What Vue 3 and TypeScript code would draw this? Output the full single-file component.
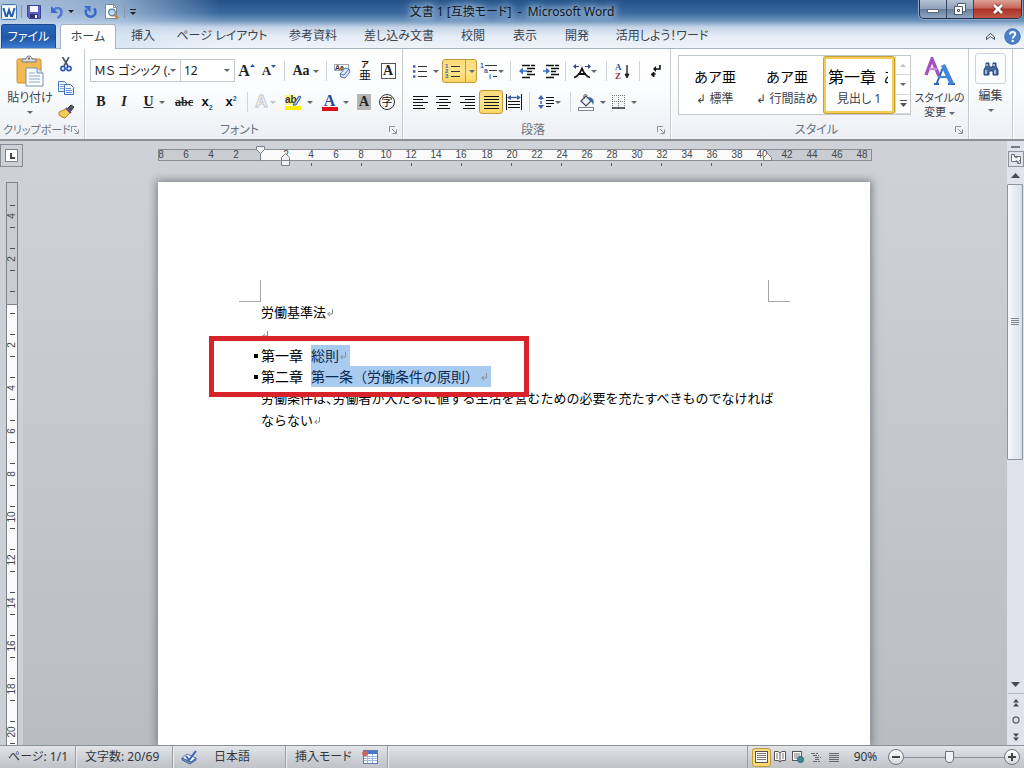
<script setup lang="ts">
import { ref } from 'vue'

const zoom = ref(90)
const fontName = ref('ＭＳ ゴシック (.')
const fontSize = ref('12')

const tabs: string[] = ['挿入', 'ページ レイアウト', '参考資料', '差し込み文書', '校閲', '表示', '開発', '活用しよう！ワード']

interface Mark { label: number; pos: number }

const rulerMarks: Mark[] = []
for (let n = -8; n <= 48; n += 2) {
  if (n !== 0) rulerMarks.push({ label: Math.abs(n), pos: Math.round(103 + n * 12.53) })
}

const sideMarks: Mark[] = []
for (let n = -4; n <= 20; n += 2) {
  if (n !== 0) sideMarks.push({ label: Math.abs(n), pos: Math.round(120 + n * 21.5) })
}
const sideTicks: number[] = []
for (let n = 0; n < 32; n++) sideTicks.push(Math.round(24 + n * 21.5))
</script>

<template>
  <div class="app">
    <header class="top">
      <div class="titlebar">
        <div class="quick">
          <button class="plain" aria-label="Word">
            <svg width="16" height="16" viewBox="0 0 16 16"><rect x=".5" y=".5" width="15" height="15" rx="1" fill="#dbe9f9" stroke="#4577b4" /><rect x="2" y="2" width="12" height="12" fill="#fff" /><path d="M2.500 4l2.300 8h1.200L8 6l2 6h1.200l2.300-8" fill="none" stroke="#245fa8" stroke-width="2" /></svg>
          </button>
          <i class="qsep"></i>
          <button class="plain" aria-label="上書き保存">
            <svg width="16" height="16" viewBox="0 0 16 16"><path d="M1.500 1.500h13v13h-11l-2-2z" fill="#5b5fc7" stroke="#3a3f9c" /><rect x="4" y="2" width="8" height="6" fill="#f4f6ff" /><rect x="4" y="10" width="8" height="4" fill="#33356f" /><rect x="9" y="11" width="2" height="3" fill="#fff" /></svg>
          </button>
          <button class="plain undo" aria-label="元に戻す">
            <svg width="14" height="16" viewBox="0 0 14 16"><path d="M3 6c3-3 8.500-2.500 8.500 2 0 3-1.500 4.500-4 6" fill="none" stroke="#4f79d2" stroke-width="2.400" /><path d="M1 2v7h7z" fill="#3f68cf" /></svg>
          </button>
          <i class="caret dark"></i>
          <button class="plain redo" aria-label="やり直し">
            <svg width="14" height="16" viewBox="0 0 14 16"><path d="M3.500 5.500a4.800 4.800 0 1 0 7.500-1" fill="none" stroke="#3f68cf" stroke-width="2.600" /><path d="M1 2h6.500v6.500z" fill="#3f68cf" /></svg>
          </button>
          <button class="plain preview" aria-label="印刷プレビュー">
            <svg width="16" height="16" viewBox="0 0 16 16"><path d="M1.500.5h8l3 3v11h-11z" fill="#fff" stroke="#7d8796" /><path d="M9.500.5v3h3" fill="none" stroke="#7d8796" /><circle cx="8" cy="8.500" r="3.300" fill="#bcdcf5" stroke="#56789c" stroke-width="1.200" /><path d="M10.500 11l3.500 3.500" stroke="#c5822e" stroke-width="2.400" /></svg>
          </button>
          <i class="qsep"></i>
          <button class="plain" aria-label="カスタマイズ">
            <svg width="8" height="8" viewBox="0 0 8 8"><path d="M1 1.500h6" stroke="#222" /><path d="M1 4h6L4 7z" fill="#222" /></svg>
          </button>
        </div>
        <h1>文書 1 [互換モード] &nbsp;-&nbsp; Microsoft Word</h1>
        <div class="controls">
          <button aria-label="最小化"><svg width="12" height="12" viewBox="0 0 12 12"><rect x=".5" y="6.500" width="11" height="3" fill="#fff" stroke="#5d6a7b" /></svg></button>
          <button aria-label="元に戻す (縮小)"><svg width="12" height="12" viewBox="0 0 12 12"><path d="M3.500.5h8v8h-3v3h-8v-8h3z" fill="#fff" stroke="#4e5a6c" /><path d="M3.500 3.500h5v5M3.500 6.500h2v2h-2z" fill="none" stroke="#4e5a6c" /></svg></button>
          <button class="close" aria-label="閉じる"><svg width="12" height="12" viewBox="0 0 12 12"><path d="M2 2l8 8M10 2l-8 8" stroke="#6a2a25" stroke-width="4.400" /><path d="M2 2l8 8M10 2l-8 8" stroke="#fff" stroke-width="2.800" /></svg></button>
        </div>
      </div>
      <nav class="tabs">
        <button class="file">ファイル</button>
        <button class="home">ホーム</button>
        <div class="rest"><button v-for="t in tabs" :key="t">{{ t }}</button></div>
        <button class="plain" aria-label="リボンの最小化"><svg width="11" height="9" viewBox="0 0 11 9"><path d="M1.500 5l4-3.500 4 3.500v2.500l-4-3-4 3z" fill="#fff" stroke="#3d4859" /></svg></button>
        <button class="plain" aria-label="ヘルプ"><svg width="17" height="17" viewBox="0 0 17 17"><circle cx="8.500" cy="8.500" r="7.700" fill="#4a82cc" stroke="#2f62ad" /><path d="M6 6.500c0-3.500 5.200-3.200 5.200-.3 0 1.900-2.500 2-2.500 4.300" fill="none" stroke="#fff" stroke-width="1.900" /><circle cx="8.700" cy="13" r="1.200" fill="#fff" /></svg></button>
      </nav>
    </header>

    <section class="ribbon">
      <div class="group clipboard">
        <div class="clip-body">
          <button class="paste">
            <svg width="28" height="32" viewBox="0 0 28 32"><rect x="1" y="4" width="24" height="24" rx="1.500" fill="#f2b950" stroke="#c98f34" /><path d="M6 7V4h4c0-4 6-4 6 0h4v3z" fill="#d9dbdd" stroke="#777d83" /><circle cx="13" cy="3.500" r="1" fill="#555" /><path d="M10 13h11l6 5v13H10z" fill="#fbfdff" stroke="#7590b5" /><path d="M21 13v5h6" fill="#d5e4f6" stroke="#7590b5" /><path d="M13 18h6M13 21h11M13 24h11M13 27h11" stroke="#8aa7ce" /></svg>
            <span>貼り付け</span>
            <i class="caret"></i>
          </button>
          <div class="clip-side">
            <button class="plain" aria-label="切り取り"><svg width="12" height="15" viewBox="0 0 12 15"><path d="M2.500 0L8 9M9 0L4 9" stroke="#48525f" stroke-width="1.600" /><circle cx="3" cy="11.500" r="2.100" fill="none" stroke="#2b55b5" stroke-width="1.600" /><circle cx="9" cy="11.500" r="2.100" fill="none" stroke="#2b55b5" stroke-width="1.600" /></svg></button>
            <button class="plain" aria-label="コピー"><svg width="16" height="14" viewBox="0 0 16 14"><path d="M.5.5h6l2 2v8h-8z" fill="#eef5ff" stroke="#4a78bd" /><path d="M2 3.500h4M2 5.500h4M2 7.500h4" stroke="#7ea4dc" /><path d="M6.500 3.500h6l3 3v7h-9z" fill="#eef5ff" stroke="#3f6fb8" /><path d="M8 7.500h5M8 9.500h6M8 11.500h6" stroke="#5f8fd6" /></svg></button>
            <button class="plain" aria-label="書式のコピー/貼り付け"><svg width="17" height="15" viewBox="0 0 17 15"><path d="M9 5l4-4 3 2-4 5z" fill="#4d5560" stroke="#31373f" /><path d="M1 8l7-3 4 4-5 5-3-1-3-2z" fill="#f0cc5a" stroke="#b48420" /><path d="M8 4l5 5" stroke="#6e4d98" stroke-width="2" /></svg></button>
          </div>
        </div>
        <footer><span>クリップボード</span><svg class="launch" width="8" height="8" viewBox="0 0 8 8"><path d="M.5 6V.5H6M3 3l4 4M7.500 3.500v4h-4" /></svg></footer>
      </div>

      <div class="group font">
        <div class="row f1">
          <label class="combo"><select v-model="fontName" aria-label="フォント"><option>ＭＳ ゴシック (.</option></select><i class="caret"></i></label>
          <label class="combo"><select v-model="fontSize" aria-label="フォント サイズ"><option>12</option></select><i class="caret"></i></label>
          <button class="serif big" aria-label="フォントの拡大">A<svg width="5" height="16" viewBox="0 0 5 16"><path d="M0 4l2.500-3L5 4z" fill="#2f57a5" /></svg></button>
          <button class="serif mid" aria-label="フォントの縮小">A<svg width="5" height="16" viewBox="0 0 5 16"><path d="M0 2h5L2.500 5z" fill="#2f57a5" /></svg></button>
          <i class="sep"></i>
          <button class="serif aa">Aa<i class="caret"></i></button>
          <i class="sep"></i>
          <button aria-label="書式のクリア"><svg width="17" height="17" viewBox="0 0 17 17"><rect x=".5" y="1.500" width="14" height="6" fill="#fff" stroke="#9ba7b8" /><text x="1" y="7" font-size="7" font-weight="bold" fill="#334" font-family="Liberation Sans, sans-serif">Aa</text><path d="M6 11l5-6 4 1 1 3-5 6-4-1z" fill="#dceafb" stroke="#5475b0" /><path d="M6 11l4 1 5-6" fill="none" stroke="#5475b0" /></svg></button>
          <button class="ruby" aria-label="ルビ"><small>ア</small><span>亜</span></button>
          <button aria-label="囲み線"><span class="boxed">A</span></button>
        </div>
        <div class="row f2">
          <button class="serif"><b>B</b></button>
          <button class="serif ital">I</button>
          <button class="serif"><u>U</u><i class="caret push"></i></button>
          <button class="serif strike">abc</button>
          <button class="script"><span>x<sub>2</sub></span></button>
          <button class="script"><span>x<sup>2</sup></span></button>
          <i class="sep"></i>
          <button class="ghost"><span>A</span><i class="caret pale"></i></button>
          <button aria-label="蛍光ペンの色"><svg width="17" height="17" viewBox="0 0 17 17"><rect y="12" width="16" height="4" fill="#ffef00" /><rect x="0" y="1" width="10" height="10" fill="#fff47c" /><text x="0" y="9" font-size="10" font-weight="bold" fill="#333" font-family="Liberation Sans, sans-serif">ab</text><path d="M8 11l6-9 2 1-5 8z" fill="#a6c6ee" stroke="#35588f" /></svg><i class="caret push"></i></button>
          <button class="colorA"><span>A</span><i class="caret push"></i></button>
          <button><span class="shaded">A</span></button>
          <button><span class="circled">字</span></button>
        </div>
        <footer><span>フォント</span><svg class="launch" width="8" height="8" viewBox="0 0 8 8"><path d="M.5 6V.5H6M3 3l4 4M7.500 3.500v4h-4" /></svg></footer>
      </div>

      <div class="group para">
        <div class="row p1">
          <button aria-label="箇条書き"><svg width="16" height="16" viewBox="0 0 16 16"><path d="M6 3.500h9M6 8.500h9M6 13.500h9" stroke="#333" stroke-width="1.200" /><path d="M1 3.500h2.400M1 8.500h2.400M1 13.500h2.400" stroke="#3b62ac" stroke-width="2.400" /></svg><i class="caret push"></i></button>
          <button class="on split" aria-label="段落番号"><svg width="16" height="16" viewBox="0 0 16 16"><path d="M6 3.500h9M6 8.500h9M6 13.500h9" stroke="#333" stroke-width="1.200" /><g font-size="6" font-weight="bold" fill="#3b62ac" font-family="Liberation Sans, sans-serif"><text x="0" y="5">1</text><text x="0" y="10">2</text><text x="0" y="15">3</text></g></svg><i class="bar"></i><i class="caret"></i></button>
          <button aria-label="アウトライン"><svg width="18" height="16" viewBox="0 0 18 16"><path d="M5 2.500h12M9 7.500h8M13 13.500h4" stroke="#333" stroke-width="1.200" /><g font-size="7" font-weight="bold" fill="#3b62ac" font-family="Liberation Sans, sans-serif"><text x="0" y="5">1</text><text x="4" y="10">a</text><text x="9" y="16">i</text></g></svg><i class="caret"></i></button>
          <i class="sep"></i>
          <button aria-label="インデントを減らす"><svg width="17" height="15" viewBox="0 0 17 15"><path d="M3 1.500h13M8 4.500h8M8 7.500h5M8 10.500h8M3 13.500h9" stroke="#111" stroke-width="1.600" stroke-dasharray="8 1" /><path d="M8 7H2" stroke="#3b6fc0" stroke-width="1.500" /><path d="M4 3.500v7L0 7z" fill="#3b6fc0" /></svg></button>
          <button aria-label="インデントを増やす"><svg width="17" height="15" viewBox="0 0 17 15"><path d="M3 1.500h13M8 4.500h8M8 7.500h5M8 10.500h8M3 13.500h9" stroke="#111" stroke-width="1.600" stroke-dasharray="8 1" /><path d="M0 7h4" stroke="#3b6fc0" stroke-width="1.500" /><path d="M3 3.500v7L7 7z" fill="#3b6fc0" /></svg></button>
          <i class="sep"></i>
          <button aria-label="拡張書式"><svg width="18" height="15" viewBox="0 0 18 15"><path d="M1 13.500c4-1 6-4 8-9 2 5 4 8 8 9M5 10h8" fill="none" stroke="#111" stroke-width="1.800" /><path d="M0 2.500L3 0v5zM18 2.500L15 0v5z" fill="#2f3f9a" /><path d="M2 2.500h4M12 2.500h4" stroke="#2f3f9a" /></svg><i class="caret"></i></button>
          <i class="sep"></i>
          <button aria-label="並べ替え"><svg width="16" height="17" viewBox="0 0 16 17"><g font-size="9" font-weight="bold" font-family="Liberation Serif, serif"><text x="0" y="7" fill="#2f57a5">A</text><text x="0" y="16" fill="#a03030">Z</text></g><path d="M12 2v12" stroke="#222" stroke-width="1.400" /><path d="M10 11h4l-2 4z" fill="#222" stroke="#222" /></svg></button>
          <i class="sep"></i>
          <button aria-label="編集記号の表示"><svg width="12" height="14" viewBox="0 0 12 14"><path d="M10 1v4H5" fill="none" stroke="#111" stroke-width="1.600" /><path d="M6 2v6L3 5z" fill="#111" /><path d="M6 10H3M4 8v5l-3-2.500z" fill="#111" stroke="#111" /></svg></button>
        </div>
        <div class="row p2">
          <button aria-label="左揃え"><svg width="15" height="14" viewBox="0 0 15 14"><path d="M0 1.500h15M0 4.500h10M0 7.500h15M0 10.500h10M0 13.500h12" class="ink" /></svg></button>
          <button aria-label="中央揃え"><svg width="15" height="14" viewBox="0 0 15 14"><path d="M0 1.500h15M3 4.500h9M0 7.500h15M3 10.500h9M1 13.500h13" class="ink" /></svg></button>
          <button aria-label="右揃え"><svg width="15" height="14" viewBox="0 0 15 14"><path d="M0 1.500h15M5 4.500h10M0 7.500h15M5 10.500h10M3 13.500h12" class="ink" /></svg></button>
          <button class="on" aria-label="両端揃え"><svg width="15" height="14" viewBox="0 0 15 14"><path d="M0 1.500h15M0 4.500h15M0 7.500h15M0 10.500h15M0 13.500h15" class="ink" /></svg></button>
          <button aria-label="均等割り付け"><svg width="16" height="16" viewBox="0 0 16 16"><path d="M.5 0v16M15.500 0v16M2 7.500h12M2 10.500h12M2 13.500h12" class="ink" /><path d="M3 3.500h10" stroke="#3b62ac" stroke-width="1.400" /><path d="M5 1v5L1 3.500zM11 1v5l4-2.500z" fill="#3b62ac" /></svg></button>
          <i class="sep"></i>
          <button aria-label="行間"><svg width="17" height="16" viewBox="0 0 17 16"><path d="M3 3v10" stroke="#3b62ac" stroke-width="1.400" stroke-dasharray="3 1" /><path d="M0 5l3-4 3 4zM0 11l3 4 3-4z" fill="#3b62ac" /><path d="M8 3.500h8M8 6.500h8M8 9.500h8M8 12.500h5" class="ink" /></svg><i class="caret"></i></button>
          <i class="sep"></i>
          <button aria-label="塗りつぶし"><svg width="17" height="17" viewBox="0 0 17 17"><path d="M3 7l5-5 5 5-5 5z" fill="#eef3fa" stroke="#444c58" stroke-width="1.200" /><path d="M6 5V2c0-2 3-2 3 0" fill="none" stroke="#444c58" /><path d="M10 3c5 0 7 4 5 8-1-3-2-4-3-4z" fill="#3c66b3" /><rect x=".5" y="13.500" width="15" height="3" fill="#fff" stroke="#7d8795" /></svg><i class="caret push"></i></button>
          <button aria-label="罫線"><svg width="14" height="14" viewBox="0 0 14 14"><path d="M.5 0v13M6.500 0v13M12.500 0v13M0 .5h13M0 6.500h13" stroke="#777" stroke-dasharray="1 1" /><path d="M0 13h13" stroke="#222" stroke-width="1.400" /></svg><i class="caret push"></i></button>
        </div>
        <footer><span>段落</span><svg class="launch" width="8" height="8" viewBox="0 0 8 8"><path d="M.5 6V.5H6M3 3l4 4M7.500 3.500v4h-4" /></svg></footer>
      </div>

      <div class="group styles">
        <div class="style-body">
          <div class="gallery">
            <button class="cell"><span class="sample">あア亜</span><span class="name">↲ 標準</span></button>
            <button class="cell"><span class="sample">あア亜</span><span class="name">↲ 行間詰め</span></button>
            <button class="cell chosen"><span class="sample">第一章&nbsp;&nbsp;あ</span><span class="name">見出し 1</span></button>
            <div class="scroller">
              <button aria-label="上の行"><i class="caret up"></i></button>
              <button aria-label="下の行"><i class="caret"></i></button>
              <button aria-label="その他"><svg width="7" height="7" viewBox="0 0 7 7"><path d="M0 .5h7" stroke="#555" /><path d="M0 3h7L3.500 7z" fill="#555" /></svg></button>
            </div>
          </div>
          <button class="change">
            <svg width="32" height="28" viewBox="0 0 32 28"><g fill="none"><path d="M2 18L8 2l7 17" stroke="#a44fc0" stroke-width="3.400" /><path d="M5 12h8" stroke="#c98ad8" stroke-width="2.400" /><path d="M10 27h5M24 27h7M12.500 27L20 8" stroke="#2f66b8" stroke-width="2" /><path d="M19 8l9 19" stroke="#3f86dc" stroke-width="4.400" /><path d="M15 20h9" stroke="#3f86dc" stroke-width="2.200" /></g></svg>
            <span>スタイルの</span>
            <span>変更 <i class="caret"></i></span>
          </button>
        </div>
        <footer><span>スタイル</span><svg class="launch" width="8" height="8" viewBox="0 0 8 8"><path d="M.5 6V.5H6M3 3l4 4M7.500 3.500v4h-4" /></svg></footer>
      </div>

      <div class="group edit">
        <button class="find">
          <span class="frame"><svg width="16" height="14" viewBox="0 0 16 14"><path d="M3 1h3v3l1 1h2l1-1V1h3v3l2 4v5h-5V9H6v4H1V8l2-4z" fill="#44669c" stroke="#27457a" /><path d="M3 8v4M12 8v4M4 2v2M11 2v2" stroke="#c7dbf5" stroke-width="1.400" /></svg></span>
          <span>編集</span>
          <i class="caret"></i>
        </button>
      </div>
    </section>

    <main class="work">
      <div class="left">
        <div class="tabsel"><span></span></div>
        <svg class="vruler" width="12" height="720" viewBox="0 0 12 720">
          <rect x="0" y="0" width="12" height="720" fill="#fafafa" />
          <rect x="0" y="0" width="12" height="122" fill="#c9ccd1" />
          <path d="M.5 720V.5h11V720M0 122.500h12" fill="none" stroke="#7d8187" />
          <path v-for="t in sideTicks" :key="'t' + t" :d="`M4 ${t - 1}.5h5`" stroke="#4c4f55" />
          <text v-for="m in sideMarks" :key="'s' + m.pos" x="0" y="0" :transform="`translate(9 ${m.pos}) rotate(-90)`" text-anchor="middle">{{ m.label }}</text>
        </svg>
      </div>

      <div class="canvas">
        <svg class="hruler" width="714" height="22" viewBox="0 0 714 22">
          <rect x=".5" y="4.500" width="713" height="11" fill="#c9ccd1" stroke="#8b8f95" />
          <rect x="103" y="5" width="506" height="10" fill="#fafafa" />
          <text v-for="m in rulerMarks" :key="m.pos" :x="m.pos" y="13" text-anchor="middle">{{ m.label }}</text>
          <path d="M153.500 18v3M203.500 18v3M253.500 18v3M303.500 18v3M353.500 18v3M403.500 18v3M453.500 18v3M503.500 18v3M553.500 18v3M603.500 18v3" stroke="#5c6066" />
          <path d="M98.500 1.500h8v3l-4 4-4-4zM102.500 8v8" fill="#f1f1f1" stroke="#7d8187" />
          <path d="M123.500 15.500v-3l4-4 4 4v3zM123.500 15.500h8v5h-8z" fill="#f1f1f1" stroke="#7d8187" />
          <path d="M605.500 15.500v-3l4-4 4 4v3z" fill="#f1f1f1" stroke="#7d8187" />
        </svg>
        <article class="page">
          <i class="corner tl"></i><i class="corner tr"></i>
          <p>労働基準法<svg class="ret" viewBox="0 0 8 8"><path d="M6.500 0v5H2M4 3L1.500 5 4 7" /></svg></p>
          <p><svg class="ret" viewBox="0 0 8 8"><path d="M6.500 0v5H2M4 3L1.500 5 4 7" /></svg></p>
          <h2><i class="dot"></i>第一章<mark>総則<svg class="ret" viewBox="0 0 8 8"><path d="M6.500 0v5H2M4 3L1.500 5 4 7" /></svg></mark></h2>
          <h2><i class="dot"></i>第二章<mark>第一条（労働条件の原則）<svg class="ret wide" viewBox="0 0 8 8"><path d="M6.500 0v5H2M4 3L1.500 5 4 7" /></svg></mark></h2>
          <p>労働条件は、労働者が人たるに値する生活を営むための必要を充たすべきものでなければ<br />ならない<svg class="ret" viewBox="0 0 8 8"><path d="M6.500 0v5H2M4 3L1.500 5 4 7" /></svg></p>
          <div class="callout"></div>
        </article>
      </div>

      <div class="scroll">
        <i class="splitbar"></i>
        <button class="toggle" aria-label="ルーラー"><svg width="12" height="12" viewBox="0 0 12 12"><path d="M1.500 1.500h3v2h6v7h-3v-2h-6z" fill="#fff" stroke="#6a6f78" /><path d="M3 1l3 4 2-1M6 7l2 3 2-3" fill="none" stroke="#6a6f78" /></svg></button>
        <button class="arrow" aria-label="上へ"><svg width="9" height="5" viewBox="0 0 9 5"><path d="M0 5l4.500-5L9 5z" fill="#454b56" /></svg></button>
        <div class="track"><div class="thumb"><i></i><i></i><i></i><i></i></div></div>
        <button class="arrow" aria-label="下へ"><svg width="9" height="5" viewBox="0 0 9 5"><path d="M0 0h9L4.500 5z" fill="#454b56" /></svg></button>
        <div class="browse">
          <button aria-label="前のページ"><svg width="6" height="8" viewBox="0 0 6 8"><path d="M0 3.500L3 0l3 3.500zM0 7.500L3 4l3 3.500z" fill="#454b56" /></svg></button>
          <button aria-label="ジャンプ先の選択"><svg width="8" height="8" viewBox="0 0 8 8"><circle cx="4" cy="4" r="3" fill="none" stroke="#656b76" stroke-width="1.400" /></svg></button>
          <button aria-label="次のページ"><svg width="6" height="8" viewBox="0 0 6 8"><path d="M0 .5h6L3 4zM0 4.500h6L3 8z" fill="#454b56" /></svg></button>
        </div>
      </div>
    </main>

    <footer class="status">
      <span class="st s1">ページ: 1/1</span>
      <span class="st s2">文字数: 20/69</span>
      <span class="st s3"><svg width="17" height="15" viewBox="0 0 17 15"><path d="M1 8l5-4 9 4-5 5z" fill="#f4f8ff" stroke="#5574a8" /><path d="M1 8v2l8 4 6-4V8l-5 4z" fill="#6d90c8" stroke="#46679e" /><path d="M5 6l3 4 7-9" fill="none" stroke="#3a62b0" stroke-width="2" /></svg>日本語</span>
      <span class="st s4">挿入モード<svg width="16" height="14" viewBox="0 0 16 14"><rect x="1.500" y=".5" width="14" height="13" fill="#fff" stroke="#5a7ab8" /><rect x="2" y="1" width="13" height="3" fill="#4677cc" /><path d="M2 6.500h13M2 8.500h13M2 10.500h13M5.500 4v9M10.500 4v9" stroke="#9fb8e2" /><circle cx="3" cy="3.500" r="2.800" fill="#d0625a" /></svg></span>
      <div class="views">
        <button class="on" aria-label="印刷レイアウト"><svg width="13" height="12" viewBox="0 0 13 12"><rect x=".5" y=".5" width="12" height="11" fill="#fff" stroke="#555" /><path d="M2 2.500h9M2 4.500h9M2 6.500h9M2 8.500h9" stroke="#777" /></svg></button>
        <button aria-label="全画面閲覧"><svg width="12" height="12" viewBox="0 0 12 12"><path d="M6 2L4 .5H.5v9H4L6 11l2-1.500h3.500v-9H8zM6 2v9" fill="#fff" stroke="#555" /><path d="M2 3h2M2 5h2M2 7h2M8 3h2M8 5h2M8 7h2" stroke="#777" /></svg></button>
        <button aria-label="Web レイアウト"><svg width="12" height="12" viewBox="0 0 12 12"><rect x=".5" y=".5" width="9" height="9" fill="#fff" stroke="#555" /><path d="M2 3h6M2 5h6M2 7h4" stroke="#777" /><circle cx="8.500" cy="8.500" r="3" fill="#38908a" stroke="#2b5c88" /></svg></button>
        <button aria-label="アウトライン表示"><svg width="10" height="10" viewBox="0 0 10 10"><path d="M0 1.500h7M2 3.500h6M4 5.500h6M4 7.500h5M2 9.500h7" stroke="#666" stroke-dasharray="4 1" /></svg></button>
        <button aria-label="下書き"><svg width="10" height="10" viewBox="0 0 10 10"><path d="M0 1.500h10M0 3.500h10M0 5.500h10M0 7.500h10M0 9.500h10" stroke="#666" /></svg></button>
      </div>
      <span class="pct">{{ zoom }}%</span>
      <button class="round" aria-label="縮小" @click="zoom -= 10"><svg width="8" height="8" viewBox="0 0 8 8"><path d="M0 4h8" stroke="#444" stroke-width="2" /></svg></button>
      <input v-model.number="zoom" type="range" min="0" max="200" aria-label="ズーム" />
      <button class="round" aria-label="拡大" @click="zoom += 10"><svg width="8" height="8" viewBox="0 0 8 8"><path d="M0 4h8M4 0v8" stroke="#444" stroke-width="2" /></svg></button>
    </footer>
  </div>
</template>

<style>
body { margin: 0; overflow: hidden; }
</style>

<style scoped>
* { box-sizing: border-box; }
svg { display: block; flex: none; }
button, select { border: 0; padding: 0; margin: 0; background: none; font: inherit; color: inherit; font-feature-settings: inherit; white-space: nowrap; }
.app { height: 100vh; display: flex; flex-direction: column; font: 12px/14px "Noto Sans", "Noto Sans CJK JP", sans-serif; font-feature-settings: "palt"; color: #3b424d; overflow: hidden; }

.top { background: linear-gradient(90deg, rgba(205, 221, 240, .8), rgba(205, 221, 240, .6) 120px, rgba(205, 221, 240, 0) 220px), linear-gradient(#245288, #3a699f 13px, #6f94bd 21px, #c4d4e6 27px, #e4ecf5 36px, #f0f4fa); }
.titlebar { height: 24px; display: grid; grid-template-columns: 1fr auto 1fr; align-items: start; }
.quick { display: flex; align-items: center; height: 23px; padding-left: 1px; gap: 4px; }
.qsep { width: 1px; height: 13px; background: #8496ad; }
.undo { margin-left: 4px; }
.redo { margin-left: 5px; }
.preview { margin-left: 3px; }
h1 { margin: 0; font-size: 12px; font-weight: 400; line-height: 23px; color: #101722; text-shadow: 0 0 6px #c6dcf2, 0 0 8px #b5d0ec, 0 0 12px #b5d0ec; }
.controls { justify-self: end; display: flex; height: 19px; margin-right: 2px; border: 1px solid #1c2f49; border-top: 0; border-radius: 0 0 5px 5px; overflow: hidden; box-shadow: 0 0 0 1px #8fa9c7; }
.controls button { width: 27px; display: grid; place-items: center; background: linear-gradient(#b5c3d4, #8d9fb8 50%, #667d9c 51%, #91a8c4); border-right: 1px solid #2f4560; }
.controls .close { width: 47px; border: 0; background: linear-gradient(#dda296, #c8665a 45%, #aa3124 50%, #c2584a); }
.tabs { height: 25px; display: flex; align-items: center; padding-right: 3px; border-bottom: 1px solid #a9b3c0; gap: 8px; }
.tabs .file { align-self: stretch; width: 55px; margin-left: 1px; color: #fff; background: linear-gradient(#2b67bd, #2157a8 55%, #3a7bd0); border: 1px solid #1d4a8e; border-bottom: 0; border-radius: 3px 3px 0 0; }
.tabs .home { align-self: stretch; width: 56px; margin: 0 -7px -1px -4px; background: #fff; border: 1px solid #a9b3c0; border-bottom: 0; border-radius: 3px 3px 0 0; }
.rest { flex: 1; display: grid; grid-template-columns: 52px 106px 76px 96px 52px 52px 52px 118px; }

.caret { flex: none; display: inline-block; width: 0; height: 0; border: 3px solid transparent; border-top: 3px solid #606874; border-bottom: 0; }
.caret.dark { border-top-color: #222; }
.caret.pale, .caret.up { border-top-color: #b9bec6; }
.caret.up { transform: rotate(180deg); }
.caret.push { margin-left: 5px; }

.ribbon { height: 92px; display: flex; background: linear-gradient(#fff, #fbfcfd 45%, #eceff3); border-bottom: 2px solid #8c9097; }
.group { display: flex; flex-direction: column; border-right: 1px solid #c6cbd2; box-shadow: 1px 0 0 #fff; }
.group footer { margin-top: auto; height: 18px; display: flex; align-items: center; color: #6b727e; padding-right: 5px; }
.group footer span { flex: 1; text-align: center; white-space: nowrap; }
.launch path { fill: none; stroke: #8a919c; }
.clipboard { width: 85px; }
.clipboard footer { padding-left: 3px; font-size: 11px; }
.clipboard footer span { text-align: left; }
.clip-body { display: flex; padding: 6px 0 0 3px; }
.paste { width: 54px; display: flex; flex-direction: column; align-items: center; }
.paste span { margin: 4px 0 6px; }
.clip-side { width: 18px; display: flex; flex-direction: column; align-items: center; gap: 9px; padding-top: 2px; }
.font { width: 318px; padding-left: 5px; }
.para { width: 268px; padding-left: 6px; }
.row { display: grid; height: 24px; align-items: stretch; }
.row button { display: flex; align-items: center; justify-content: center; }
.row .sep { justify-self: center; align-self: center; width: 1px; height: 20px; background: #cfd4da; }
.f1 { margin-top: 10px; grid-template-columns: 91px 54px 23px 22px 9px 33px 8px 24px 22px 24px; }
.f2 { margin-top: 7px; grid-template-columns: 22px 24px 36px 24px 22px 26px 6px 31px 36px 36px 22px 24px; }
.p1 { margin-top: 10px; grid-template-columns: 33px 35px 29px 9px 24px 24px 5px 33px 10px 23px 10px 24px; }
.p2 { margin-top: 7px; grid-template-columns: 22px 24px 24px 24px 22px 8px 33px 9px 33px 33px; }
.combo { display: flex; align-items: center; height: 23px; padding-right: 4px; border: 1px solid #c3c8cf; background: #fff; }
.combo + .combo { border-left: 0; }
.combo select { flex: 1; min-width: 0; padding-left: 3px; appearance: none; color: #222; outline: 0; }
.serif { font-family: "Liberation Serif", serif; font-size: 14px; font-weight: 700; color: #222; }
.big { font-size: 16px; }
.mid { font-size: 13px; }
.aa { gap: 3px; }
.ital { font-style: italic; }
.strike { font-size: 12px; text-decoration: line-through; }
.script { font-family: "Liberation Sans", sans-serif; font-weight: 700; font-size: 13px; color: #111; }
.script sub, .script sup { font-size: 7px; color: #2f57a5; line-height: 0; }
.row .ruby { flex-direction: column; color: #111; line-height: 14px; }
.ruby small { font-size: 8px; line-height: 10px; font-weight: 700; }
.boxed, .shaded { width: 15px; height: 16px; border: 1px solid #555; font: 700 14px/14px "Liberation Serif", serif; color: #222; }
.shaded { background: #b5b5b5; border-color: #b5b5b5; width: 14px; }
.circled { width: 16px; height: 16px; border: 1px solid #333; border-radius: 50%; font-size: 11px; line-height: 14px; color: #111; }
.ghost span { font: 700 17px/18px "Liberation Sans", sans-serif; color: #fff; -webkit-text-stroke: 1px #c3c6ca; }
.row .ghost { gap: 2px; }
.colorA span { width: 16px; height: 17px; border-bottom: 4px solid #e0101a; font: 700 16px/13px "Liberation Serif", serif; color: #27468d; }
.on { background: linear-gradient(#fbd977, #fce58e 50%, #fdd765); border: 1px solid #c29a3e; border-radius: 3px; }
.split { gap: 4px; }
.split .bar { align-self: stretch; width: 1px; background: #c29a3e; margin-right: -1px; }
.ink { stroke: #111; stroke-width: 1; fill: none; }

.styles { width: 298px; padding-left: 7px; }
.style-body { display: flex; margin-top: 6px; }
.gallery { width: 233px; height: 60px; display: grid; grid-template-columns: 72px 72px 72px 15px; border: 1px solid #c3c8cf; background: #fff; }
.cell { height: 58px; display: flex; flex-direction: column; align-items: center; overflow: hidden; padding-top: 8px; border: 3px solid transparent; }
.sample { font: 14px/18px "Noto Sans CJK JP", sans-serif; color: #000; margin-bottom: 7px; }
.chosen { border: 3px solid #f5cd55; outline: 1px solid #c9a038; outline-offset: -1px; border-radius: 3px; }
.chosen .sample { align-self: stretch; margin: 0 4px 7px 2px; font-size: 16px; text-align: left; overflow: hidden; }
.scroller { display: grid; grid-template-rows: 1fr 1fr 1fr; border-left: 1px solid #d1d6dc; }
.scroller button { display: grid; place-items: center; border-bottom: 1px solid #d1d6dc; }
.change { flex: 1; display: flex; flex-direction: column; align-items: center; padding-top: 2px; font-size: 11px; line-height: 14px; }
.change svg { margin-bottom: 6px; }
.change .caret { vertical-align: middle; }
.edit { width: 44px; align-items: center; }
.find { display: flex; flex-direction: column; align-items: center; padding-top: 4px; }
.frame { width: 31px; height: 31px; display: grid; place-items: center; border: 1px solid #ccd2da; border-radius: 3px; margin-bottom: 5px; background: #fbfcfe; }
.find .caret { margin-top: 6px; }

.work { flex: 1; min-height: 0; display: flex; background: linear-gradient(#cfd2d7, #b9bcc1); overflow: hidden; }
.left { width: 23px; display: flex; flex-direction: column; align-items: center; overflow: hidden; background: #cdd0d6; }
.tabsel { flex: none; width: 23px; height: 23px; margin: 3px 0 15px; display: grid; place-items: center; border: 1px solid #888c92; }
.tabsel span { width: 13px; height: 13px; background: linear-gradient(#444, #444) 4px 3px / 2px 6px no-repeat, linear-gradient(#444, #444) 4px 7px / 5px 2px no-repeat, #fff; border: 1px solid #7d8187; }
.vruler text, .hruler text { font: 10px "Liberation Sans", sans-serif; fill: #44474c; }
.canvas { flex: 1; min-width: 0; display: flex; flex-direction: column; align-items: center; overflow: hidden; }
.hruler { margin: 4px 0 15px; }
.page { position: relative; flex: 1; width: 712px; margin-right: 2px; padding: 119px 0 0 103px; background: #fff; box-shadow: 0 0 8px 2px #7f8388; color: #000; font-family: "Noto Sans CJK JP", sans-serif; }
.page p { margin: 0; font-size: 13px; line-height: 22px; white-space: nowrap; font-feature-settings: "halt"; }
.page h2 { position: relative; margin: 0; font-size: 14px; line-height: 21px; font-weight: 400; font-feature-settings: normal; display: flex; }
.dot { position: absolute; left: -7px; top: 9px; width: 4px; height: 4px; background: #000; }
mark { display: flex; align-items: center; margin-left: 8px; padding-right: 3px; background: #a9cbf0; color: #0c2a50; }
.ret { display: inline-block; width: 8px; height: 8px; }
.ret.wide { margin: 0 0 0 1px; }
.ret path { fill: none; stroke: #8b8f95; }
.corner { position: absolute; top: 98px; width: 22px; height: 22px; border-bottom: 1px solid #a5a5a5; }
.tl { left: 81px; border-right: 1px solid #a5a5a5; }
.tr { left: 610px; border-left: 1px solid #a5a5a5; }
.callout { position: absolute; left: 51px; top: 154px; width: 320px; height: 61px; border: 5px solid #d8232b; }

.scroll { width: 17px; display: flex; flex-direction: column; align-items: center; background: #dfe3eb; }
.splitbar { width: 9px; height: 2px; margin: 5px 0 3px; background: #747c89; }
.toggle { width: 16px; height: 16px; display: grid; place-items: center; border: 1px solid #8d929a; }
.arrow { width: 17px; height: 17px; display: grid; place-items: center; }
.track { flex: 1; align-self: stretch; }
.thumb { height: 56%; width: 16px; border: 1px solid #8d94a1; border-radius: 1px; background: linear-gradient(90deg, #f6f8fb, #d9dfea); display: flex; flex-direction: column; align-items: center; justify-content: center; gap: 1px; }
.thumb i { width: 8px; height: 1px; background: #7c8492; }
.browse { display: flex; flex-direction: column; border-top: 1px solid #b0b6c0; }
.browse button { height: 17px; display: grid; place-items: center; width: 16px; }

.status { height: 23px; display: flex; align-items: center; border-top: 1px solid #8c9097; background: linear-gradient(#e3e5e8, #cfd2d6 50%, #bfc3c8); color: #33373d; padding-right: 4px; }
.st { align-self: stretch; display: flex; align-items: center; white-space: nowrap; border-right: 1px solid #9a9ea5; box-shadow: 1px 0 0 #edeff1; }
.s1 { width: 76px; padding-left: 8px; }
.s2 { width: 97px; padding-left: 9px; }
.s3 { width: 113px; padding-left: 8px; gap: 16px; }
.s4 { width: 102px; padding-left: 9px; gap: 10px; }
.views { margin-left: auto; align-self: stretch; display: flex; align-items: center; border-left: 1px solid #9a9ea5; padding-left: 4px; }
.views button { width: 18px; height: 18px; display: grid; place-items: center; }
.views .on { width: 19px; height: 19px; }
.pct { width: 45px; text-align: center; }
.round { width: 16px; height: 16px; display: grid; place-items: center; border: 1px solid #70757d; border-radius: 50%; background: linear-gradient(#fff, #d7dade); }
.status input { appearance: none; width: 100px; height: 16px; margin: 0; background: linear-gradient(#8b9098, #8b9098) center / 100% 1px no-repeat; }
.status input::-webkit-slider-thumb { appearance: none; width: 9px; height: 12px; border: 1px solid #6a6f78; border-radius: 1px 1px 5px 5px; background: #f2f3f5; }
</style>
